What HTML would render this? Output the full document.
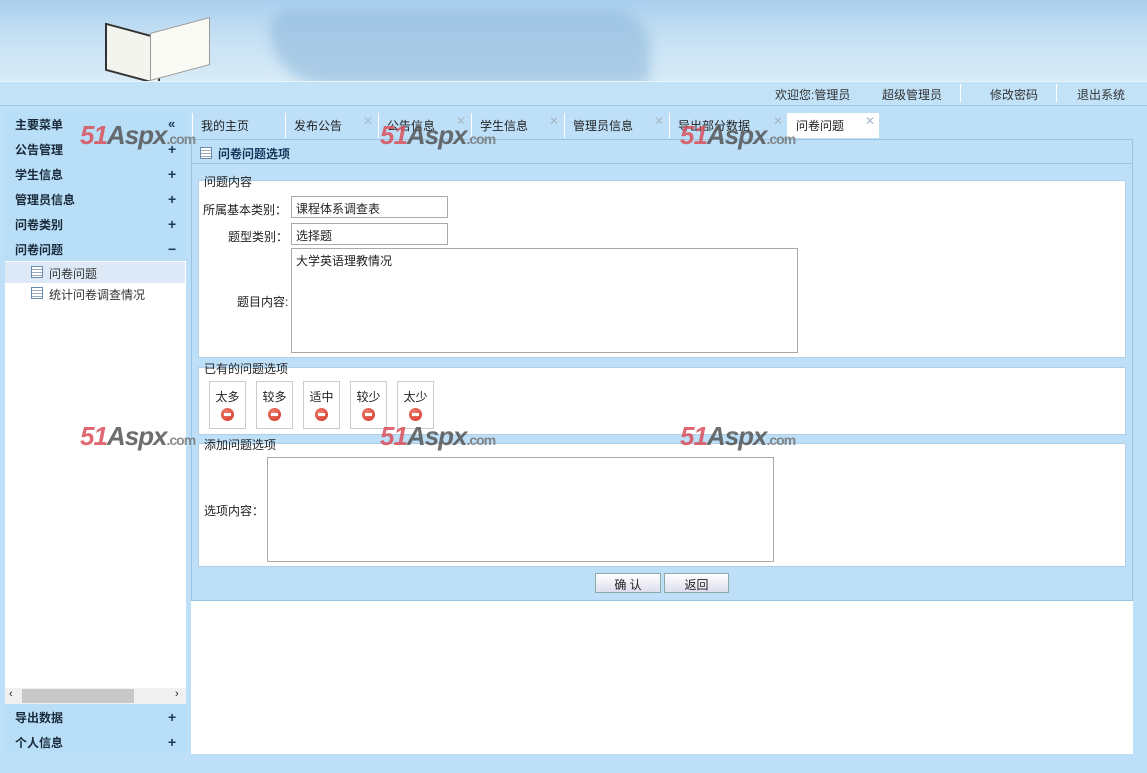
<!DOCTYPE html>
<html><head><meta charset="utf-8">
<style>
*{margin:0;padding:0;box-sizing:border-box}
body{width:1147px;height:773px;background:#bde0f8;font-family:"Liberation Sans","Noto Sans CJK SC",sans-serif;font-size:12px;color:#222;position:relative;overflow:hidden}
.abs{position:absolute}
.banner{left:0;top:0;width:1147px;height:81px;background:linear-gradient(180deg,#a9cfee 0%,#c5e0f4 45%,#d8ebf7 100%);overflow:hidden}
.topbar{left:0;top:81px;width:1147px;height:25px;background:#c2e2f8;border-top:1px solid #e8f4fc;border-bottom:1px solid #9ccbea}
.topbar span{position:absolute;top:4px;font-size:12px;color:#333}
.side{left:5px;top:112px;width:181px;height:642px;background:#b8def8}
.mi{position:absolute;left:10px;font-weight:bold;font-size:12px;color:#1a2a3a}
.pl{position:absolute;left:163px;font-weight:bold;font-size:14px;color:#1a3a5a}
.tab{position:absolute;top:113px;height:25px;font-size:12px;color:#222;padding:4px 0 0 8px;border-left:1px solid #fff}
.tab .x{position:absolute;right:4px;top:1px;color:#a8b8c8;font-size:12px}
fieldset{position:absolute;background:#fff;border:1px solid #b0cfe6}
.lbl{position:absolute;font-size:12px;color:#222}
.inp{position:absolute;border:1px solid #aaa;background:#fff;font-size:12px;padding:3px 4px;color:#222}
.opt{position:absolute;top:381px;width:37px;height:48px;border:1px solid #ccc;background:#fff;text-align:center;font-size:12px;padding-top:6px}
.opt i{display:block;margin:3px auto 0;width:13px;height:13px;border-radius:50%;background:radial-gradient(circle at 40% 35%,#f08070,#d03020);position:relative}
.opt i:after{content:"";position:absolute;left:3px;top:5px;width:7px;height:3px;background:#fff}
.wm{position:absolute;font-weight:bold;font-style:italic;font-size:26px;color:#d9505a;opacity:.85;letter-spacing:-1px}
.wm b{color:#555}
.wm small{font-size:14px;color:#777;font-style:normal}
.btn{position:absolute;top:573px;height:20px;border:1px solid #8aa;background:linear-gradient(#fff,#dde);font-size:12px;text-align:center;padding-top:2px}
</style></head><body>
<div class="abs banner">
 <div class="abs" style="left:270px;top:10px;width:380px;height:75px;background:#8fb9dc;opacity:.6;border-radius:20px 40px 10px 60px;filter:blur(6px)"></div>
 <div class="abs" style="left:105px;top:30px;width:55px;height:48px;background:#f4f4ee;transform:skewY(15deg);border:2px solid #333"></div>
 <div class="abs" style="left:150px;top:25px;width:60px;height:48px;background:#fafaf5;transform:skewY(-15deg);border:1px solid #999"></div>
</div>
<div class="abs topbar">
 <span style="left:775px">欢迎您:管理员</span>
 <span style="left:882px">超级管理员</span>
 <span style="left:960px;top:2px;height:18px;border-left:1px solid #fff;width:1px"></span>
 <span style="left:990px">修改密码</span>
 <span style="left:1056px;top:2px;height:18px;border-left:1px solid #fff;width:1px"></span>
 <span style="left:1077px">退出系统</span>
</div>
<div class="abs side">
 <div class="mi" style="top:4px">主要菜单</div><div class="pl" style="top:4px;font-size:13px">«</div>
 <div class="mi" style="top:29px">公告管理</div><div class="pl" style="top:29px">+</div>
 <div class="mi" style="top:54px">学生信息</div><div class="pl" style="top:54px">+</div>
 <div class="mi" style="top:79px">管理员信息</div><div class="pl" style="top:79px">+</div>
 <div class="mi" style="top:104px">问卷类别</div><div class="pl" style="top:104px">+</div>
 <div class="mi" style="top:129px">问卷问题</div><div class="pl" style="top:129px">−</div>
 <div class="abs" style="left:0;top:149px;width:181px;height:427px;background:#fff"></div>
 <div class="abs" style="left:0;top:150px;width:180px;height:21px;background:#dde9f6"></div>
 <div class="abs" style="left:26px;top:154px;width:12px;height:12px;border:1px solid #6a8bb0;background:repeating-linear-gradient(#fff 0 2px,#9ab 2px 3px)"></div>
 <div class="abs" style="left:44px;top:153px;color:#333">问卷问题</div>
 <div class="abs" style="left:26px;top:175px;width:12px;height:12px;border:1px solid #6a8bb0;background:repeating-linear-gradient(#fff 0 2px,#9ab 2px 3px)"></div>
 <div class="abs" style="left:44px;top:174px;color:#333">统计问卷调查情况</div>
 <div class="abs" style="left:0;top:576px;width:181px;height:16px;background:#f0f0f0"></div>
 <div class="abs" style="left:17px;top:577px;width:112px;height:14px;background:#c8c8c8"></div>
 <div class="abs" style="left:4px;top:576px;font-size:11px">‹</div><div class="abs" style="left:170px;top:576px;font-size:11px">›</div>
 <div class="mi" style="top:597px">导出数据</div><div class="pl" style="top:597px">+</div>
 <div class="mi" style="top:622px">个人信息</div><div class="pl" style="top:622px">+</div>
</div>
<div class="abs" style="left:191px;top:112px;width:942px;height:642px;background:#fff"></div>
<div class="abs" style="left:191px;top:112px;width:942px;height:27px;background:#bde0f8"></div>
<div class="tab" style="left:192px;width:88px">我的主页</div>
<div class="tab" style="left:285px;width:92px">发布公告<span class="x">✕</span></div>
<div class="tab" style="left:378px;width:92px">公告信息<span class="x">✕</span></div>
<div class="tab" style="left:471px;width:92px">学生信息<span class="x">✕</span></div>
<div class="tab" style="left:564px;width:104px">管理员信息<span class="x">✕</span></div>
<div class="tab" style="left:669px;width:118px">导出部分数据<span class="x">✕</span></div>
<div class="tab" style="left:787px;width:92px;background:#fff">问卷问题<span class="x">✕</span></div>
<div class="abs" style="left:191px;top:139px;width:942px;height:462px;background:#bde0f8;border:1px solid #99c4e4"></div>
<div class="abs" style="left:191px;top:139px;width:942px;height:25px;border-bottom:1px solid #99c4e4"></div>
<div class="abs" style="left:200px;top:147px;width:12px;height:12px;border:1px solid #6a8bb0;background:repeating-linear-gradient(#fff 0 2px,#9ab 2px 3px)"></div>
<div class="abs" style="left:218px;top:145px;font-weight:bold;color:#14365a">问卷问题选项</div>
<fieldset style="left:198px;top:180px;width:928px;height:178px"></fieldset>
<div class="lbl" style="left:204px;top:173px;background:linear-gradient(#bde0f8 50%,#fff 50%)">问题内容</div>
<div class="lbl" style="left:203px;top:201px">所属基本类别：</div>
<div class="inp" style="left:291px;top:196px;width:157px;height:22px">课程体系调查表</div>
<div class="lbl" style="left:228px;top:228px">题型类别：</div>
<div class="inp" style="left:291px;top:223px;width:157px;height:22px">选择题</div>
<div class="inp" style="left:291px;top:248px;width:507px;height:105px">大学英语理教情况</div>
<div class="lbl" style="left:237px;top:293px">题目内容:</div>
<fieldset style="left:198px;top:367px;width:928px;height:68px"></fieldset>
<div class="lbl" style="left:204px;top:360px;background:linear-gradient(#bde0f8 50%,#fff 50%)">已有的问题选项</div>
<div class="opt" style="left:209px">太多<i></i></div>
<div class="opt" style="left:256px">较多<i></i></div>
<div class="opt" style="left:303px">适中<i></i></div>
<div class="opt" style="left:350px">较少<i></i></div>
<div class="opt" style="left:397px">太少<i></i></div>
<fieldset style="left:198px;top:443px;width:928px;height:124px"></fieldset>
<div class="lbl" style="left:204px;top:436px;background:linear-gradient(#bde0f8 50%,#fff 50%)">添加问题选项</div>
<div class="lbl" style="left:204px;top:502px">选项内容：</div>
<div class="inp" style="left:267px;top:457px;width:507px;height:105px"></div>
<div class="btn" style="left:595px;width:66px">确 认</div>
<div class="btn" style="left:664px;width:65px">返回</div>
<div class="wm" style="left:80px;top:120px">51<b>Aspx</b><small>.com</small></div>
<div class="wm" style="left:380px;top:120px">51<b>Aspx</b><small>.com</small></div>
<div class="wm" style="left:680px;top:120px">51<b>Aspx</b><small>.com</small></div>
<div class="wm" style="left:80px;top:421px">51<b>Aspx</b><small>.com</small></div>
<div class="wm" style="left:380px;top:421px">51<b>Aspx</b><small>.com</small></div>
<div class="wm" style="left:680px;top:421px">51<b>Aspx</b><small>.com</small></div>
</body></html>
